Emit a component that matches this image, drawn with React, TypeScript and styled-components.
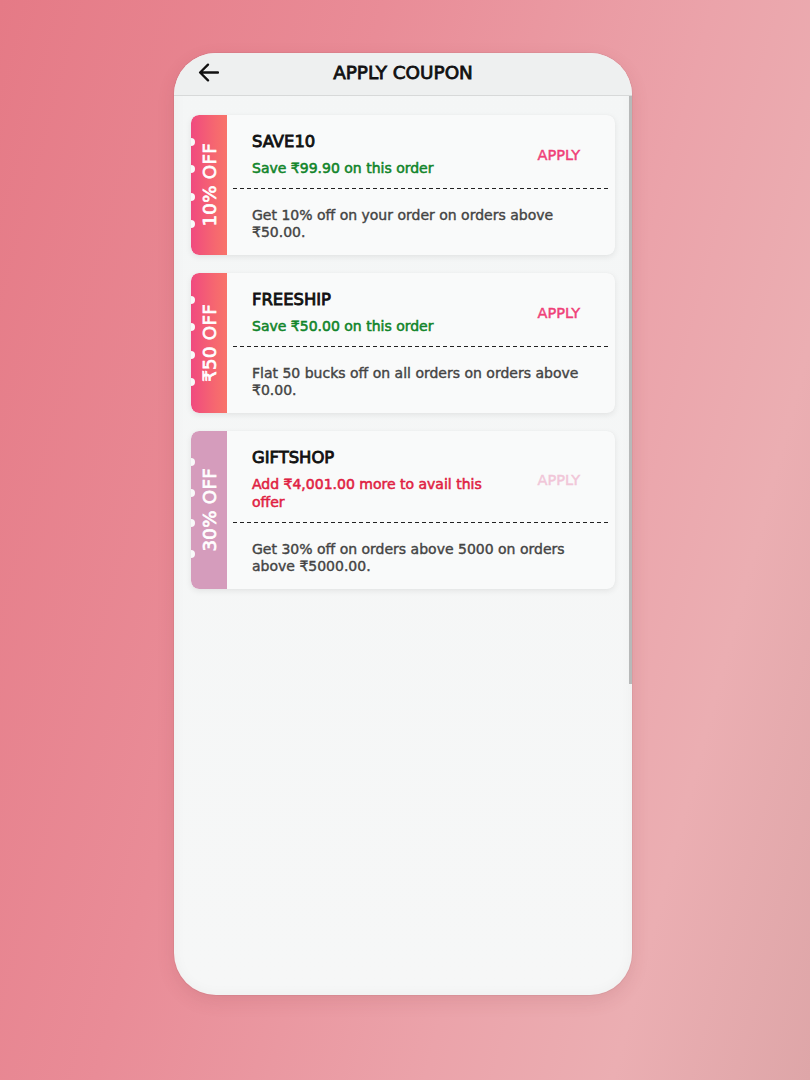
import React from "react";
import styled, { createGlobalStyle } from "styled-components";

const GlobalStyle = createGlobalStyle`
  html, body { margin: 0; padding: 0; }
  body {
    font-family: "DejaVu Sans", "Liberation Sans", sans-serif;
    background: linear-gradient(105deg, #e57a86 0%, #e98c97 35%, #eba3aa 65%, #ebaeb2 82%, #dea6a8 100%);
    min-height: 1080px;
  }
`;

const Page = styled.div`
  height: 1080px;
  box-sizing: border-box;
  padding: 53px 4px 0 0;
  display: flex;
  justify-content: center;
  align-items: flex-start;
`;

const Phone = styled.div`
  width: 458px;
  height: 942px;
  border-radius: 42px;
  overflow: hidden;
  background: linear-gradient(180deg, #f4f6f6 0%, #f6f7f7 100%);
  display: flex;
  flex-direction: column;
  box-shadow: 0 0 0 1px rgba(0, 0, 0, 0.04), 0 6px 18px rgba(120, 40, 50, 0.12),
    inset 0 0 14px rgba(0, 0, 0, 0.04);
`;

const Header = styled.header`
  height: 43px;
  box-sizing: border-box;
  flex-shrink: 0;
  background: #eef0f0;
  border-bottom: 1px solid #d7d9d9;
  display: grid;
  grid-template-columns: 1fr auto 1fr;
  align-items: center;
  padding-bottom: 4px;
`;

const BackButton = styled.button`
  justify-self: start;
  margin-left: 24px;
  padding: 0;
  border: 0;
  background: none;
  display: flex;
  align-items: center;
  cursor: pointer;
`;

const Title = styled.h1`
  margin: 0;
  font-size: 18.4px;
  font-weight: 400;
  color: #111;
  -webkit-text-stroke: 0.8px #111;
`;

const Body = styled.main`
  flex: 1;
  position: relative;
  padding: 19px 17px 18px;
`;

const ScrollThumb = styled.div`
  position: absolute;
  top: 0;
  right: 0;
  width: 3px;
  height: 588px;
  background: #b7b9b9;
`;

const List = styled.div`
  display: flex;
  flex-direction: column;
  gap: 18px;
`;

const Card = styled.div`
  display: flex;
  border-radius: 8px;
  overflow: hidden;
  background: #f9fafa;
  box-shadow: 0 2px 6px rgba(0, 0, 0, 0.08), 0 0 1px rgba(0, 0, 0, 0.06);
`;

const Stub = styled.div<{ $bg: string }>`
  position: relative;
  width: 36px;
  flex-shrink: 0;
  background: ${(p) => p.$bg};
  display: flex;
  align-items: center;
  justify-content: center;
  border-radius: 8px 0 0 8px;
`;

const StubText = styled.span`
  writing-mode: vertical-rl;
  transform: rotate(180deg);
  color: #fff;
  font-size: 18.2px;
  white-space: nowrap;
  -webkit-text-stroke: 0.7px #fff;
  letter-spacing: 0.3px;
`;

const Notches = styled.div`
  position: absolute;
  top: 0;
  bottom: 0;
  left: -4px;
  width: 8px;
  padding: 4px 0 8px;
  box-sizing: border-box;
  display: flex;
  flex-direction: column;
  justify-content: space-evenly;
`;

const Notch = styled.span`
  display: block;
  width: 8px;
  height: 8px;
  border-radius: 50%;
  background: #f9fafa;
`;

const Main = styled.div`
  flex: 1;
  padding: 0 5px 0 6px;
  display: flex;
  flex-direction: column;
`;

const Top = styled.div`
  display: flex;
  align-items: center;
  padding: 17px 30px 11px 19px;
  gap: 24px;
`;

const Info = styled.div`
  flex: 1;
  display: flex;
  flex-direction: column;
  gap: 7px;
`;

const Code = styled.div`
  font-size: 16.4px;
  line-height: 20px;
  color: #111;
  -webkit-text-stroke: 0.85px #111;
`;

const Saving = styled.div<{ $tone: "ok" | "warn" }>`
  font-size: 14px;
  line-height: 18px;
  color: ${(p) => (p.$tone === "ok" ? "#11852a" : "#e01f43")};
  -webkit-text-stroke: 0.55px ${(p) => (p.$tone === "ok" ? "#11852a" : "#e01f43")};
`;

const ApplyButton = styled.button<{ $disabled?: boolean }>`
  border: 0;
  background: none;
  padding: 0;
  font-family: inherit;
  font-size: 14.5px;
  color: ${(p) => (p.$disabled ? "#f1c6d8" : "#ef3f78")};
  -webkit-text-stroke: 0.45px ${(p) => (p.$disabled ? "#f1c6d8" : "#ef3f78")};
  cursor: ${(p) => (p.$disabled ? "default" : "pointer")};
`;

const Divider = styled.div`
  height: 1px;
  background-image: repeating-linear-gradient(90deg, #222 0 4px, transparent 4px 7px);
`;

const Description = styled.p`
  margin: 0;
  padding: 18px 19px 14px;
  font-size: 14px;
  line-height: 17px;
  color: #444;
  -webkit-text-stroke: 0.4px #444;
`;

type Coupon = {
  stub: string;
  stubBg: string;
  code: string;
  saving: string;
  tone: "ok" | "warn";
  disabled?: boolean;
  desc: string;
};

const PINK = "linear-gradient(90deg, #f04a7f 0%, #f6696f 70%, #f8736a 100%)";

const coupons: Coupon[] = [
  {
    stub: "10% OFF",
    stubBg: PINK,
    code: "SAVE10",
    saving: "Save ₹99.90 on this order",
    tone: "ok",
    desc: "Get 10% off on your order on orders above ₹50.00.",
  },
  {
    stub: "₹50 OFF",
    stubBg: PINK,
    code: "FREESHIP",
    saving: "Save ₹50.00 on this order",
    tone: "ok",
    desc: "Flat 50 bucks off on all orders on orders above ₹0.00.",
  },
  {
    stub: "30% OFF",
    stubBg: "#d59cbc",
    code: "GIFTSHOP",
    saving: "Add ₹4,001.00 more to avail this offer",
    tone: "warn",
    disabled: true,
    desc: "Get 30% off on orders above 5000 on orders above ₹5000.00.",
  },
];

const BackArrow = () => (
  <svg width="21" height="19" viewBox="0 0 21 19" fill="none">
    <path
      d="M20 9.5H2.2M10 1.6L2.1 9.5L10 17.4"
      stroke="#111"
      strokeWidth="2.3"
      strokeLinecap="round"
      strokeLinejoin="round"
    />
  </svg>
);

export default function App() {
  return (
    <>
      <GlobalStyle />
      <Page>
        <Phone>
          <Header>
            <BackButton aria-label="Back">
              <BackArrow />
            </BackButton>
            <Title>APPLY COUPON</Title>
            <span />
          </Header>
          <Body>
            <ScrollThumb />
            <List>
              {coupons.map((c) => (
                <Card key={c.code}>
                  <Stub $bg={c.stubBg}>
                    <Notches>
                      <Notch />
                      <Notch />
                      <Notch />
                      <Notch />
                    </Notches>
                    <StubText>{c.stub}</StubText>
                  </Stub>
                  <Main>
                    <Top>
                      <Info>
                        <Code>{c.code}</Code>
                        <Saving $tone={c.tone}>{c.saving}</Saving>
                      </Info>
                      <ApplyButton $disabled={c.disabled}>APPLY</ApplyButton>
                    </Top>
                    <Divider />
                    <Description>{c.desc}</Description>
                  </Main>
                </Card>
              ))}
            </List>
          </Body>
        </Phone>
      </Page>
    </>
  );
}
